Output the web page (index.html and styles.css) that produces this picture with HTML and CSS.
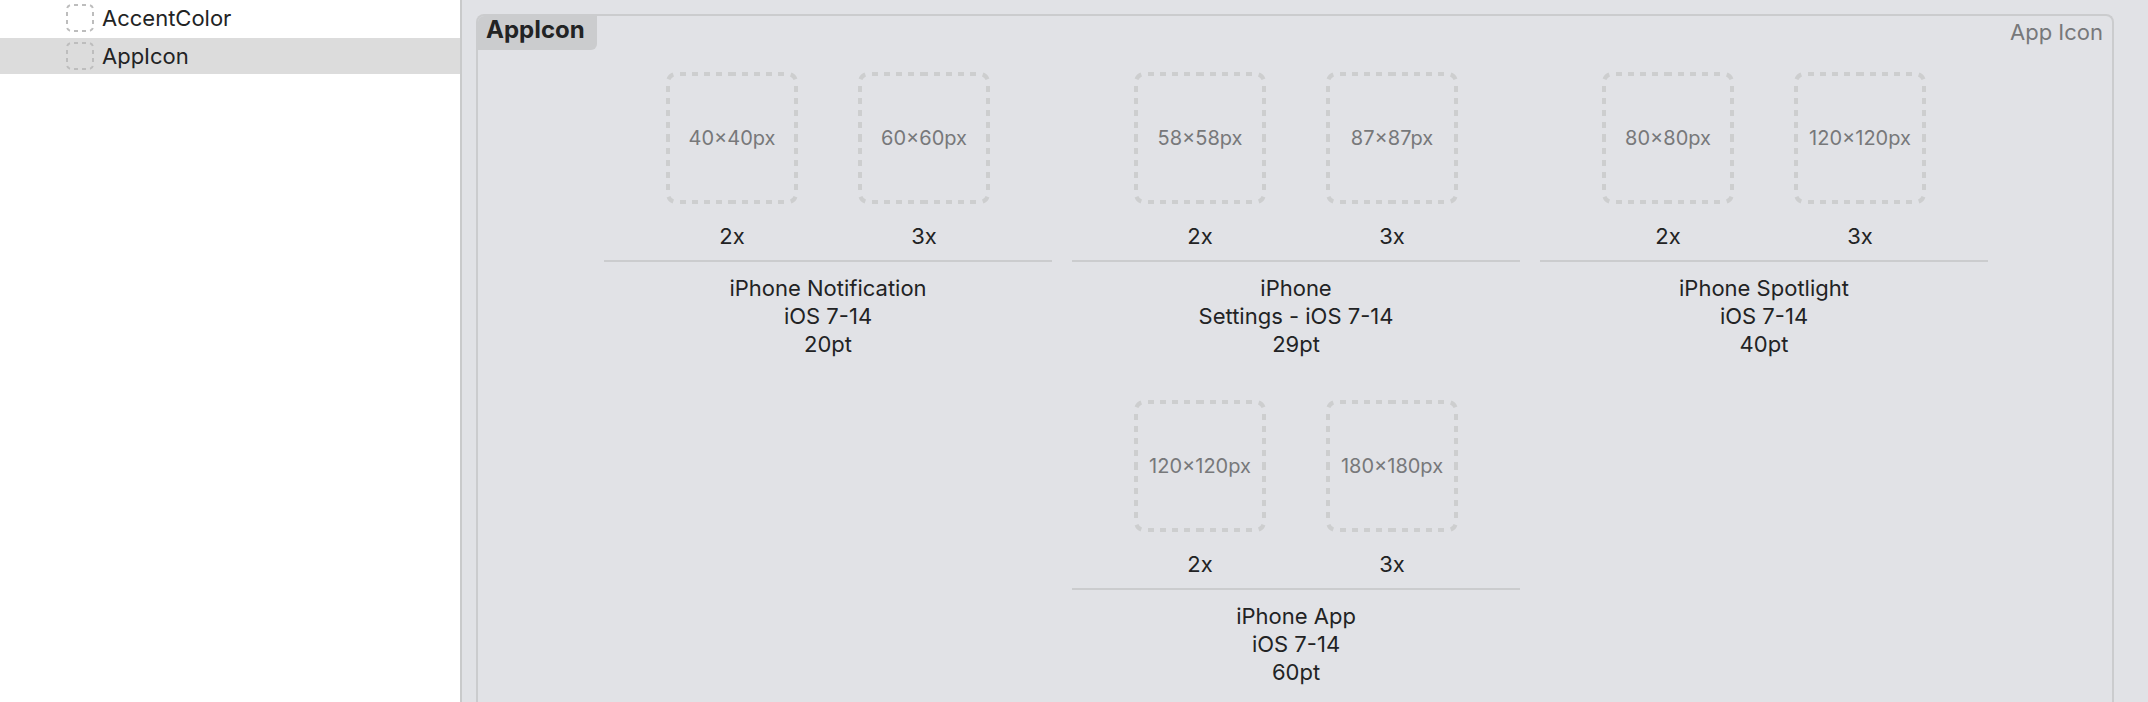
FILE: index.html
```html
<!DOCTYPE html>
<html lang="en">
<head>
<meta charset="utf-8">
<title>Asset Catalog</title>
<link rel="stylesheet" href="styles.css">
</head>
<body>
<svg class="defs" aria-hidden="true">
  <symbol id="well" viewBox="0 0 132 132">
    <g id="well-side">
      <path d="M14 2h6M26 2h6M38 2h6M50 2h6M62 2h8M76 2h6M88 2h6M100 2h6M112 2h6"/>
      <path d="M2.5 7.3A8 8 0 0 1 7.3 2.5"/>
    </g>
    <use href="#well-side" transform="rotate(90 66 66)"/>
    <use href="#well-side" transform="rotate(180 66 66)"/>
    <use href="#well-side" transform="rotate(270 66 66)"/>
  </symbol>
  <symbol id="slot" viewBox="0 0 28 28">
    <g id="slot-side">
      <path d="M8 1h4M16 1h4"/>
      <path d="M1.2 4A4 4 0 0 1 4 1.2"/>
    </g>
    <use href="#slot-side" transform="rotate(90 14 14)"/>
    <use href="#slot-side" transform="rotate(180 14 14)"/>
    <use href="#slot-side" transform="rotate(270 14 14)"/>
  </symbol>
</svg>
<div class="app">
  <nav class="sidebar">
    <button class="item" type="button"><svg class="item-icon"><use href="#slot"/></svg>AccentColor</button>
    <button class="item selected" type="button"><svg class="item-icon"><use href="#slot"/></svg>AppIcon</button>
  </nav>
  <main class="editor">
    <section class="set">
      <header class="set-header">
        <h1 class="set-name">AppIcon</h1>
        <span class="set-kind">App Icon</span>
      </header>
      <div class="groups">
        <article class="group">
          <div class="wells">
            <figure class="well"><div class="frame"><svg class="outline"><use href="#well"/></svg><span class="size">40×40px</span></div><figcaption>2x</figcaption></figure>
            <figure class="well"><div class="frame"><svg class="outline"><use href="#well"/></svg><span class="size">60×60px</span></div><figcaption>3x</figcaption></figure>
          </div>
          <p class="caption">iPhone Notification<br>iOS 7-14<br>20pt</p>
        </article>
        <article class="group">
          <div class="wells">
            <figure class="well"><div class="frame"><svg class="outline"><use href="#well"/></svg><span class="size">58×58px</span></div><figcaption>2x</figcaption></figure>
            <figure class="well"><div class="frame"><svg class="outline"><use href="#well"/></svg><span class="size">87×87px</span></div><figcaption>3x</figcaption></figure>
          </div>
          <p class="caption">iPhone<br>Settings - iOS 7-14<br>29pt</p>
        </article>
        <article class="group">
          <div class="wells">
            <figure class="well"><div class="frame"><svg class="outline"><use href="#well"/></svg><span class="size">80×80px</span></div><figcaption>2x</figcaption></figure>
            <figure class="well"><div class="frame"><svg class="outline"><use href="#well"/></svg><span class="size">120×120px</span></div><figcaption>3x</figcaption></figure>
          </div>
          <p class="caption">iPhone Spotlight<br>iOS 7-14<br>40pt</p>
        </article>
        <article class="group">
          <div class="wells">
            <figure class="well"><div class="frame"><svg class="outline"><use href="#well"/></svg><span class="size">120×120px</span></div><figcaption>2x</figcaption></figure>
            <figure class="well"><div class="frame"><svg class="outline"><use href="#well"/></svg><span class="size">180×180px</span></div><figcaption>3x</figcaption></figure>
          </div>
          <p class="caption">iPhone App<br>iOS 7-14<br>60pt</p>
        </article>
      </div>
    </section>
  </main>
</div>
</body>
</html>
```

FILE: styles.css
```css
* {
  box-sizing: border-box;
}

body {
  margin: 0;
  font: 22px/28px Inter, sans-serif;
  color: #222324;
  background: #e1e2e6;
}

.defs {
  position: absolute;
  width: 0;
  height: 0;
}

.app {
  display: flex;
  height: 100vh;
  overflow: hidden;
}

.sidebar {
  display: flex;
  flex-direction: column;
  gap: 2px;
  flex: none;
  width: 462px;
  background: #fff;
  border-right: 2px solid #c9cacb;
}

.item {
  display: flex;
  align-items: center;
  gap: 8px;
  height: 36px;
  padding: 0 0 0 66px;
  border: 0;
  background: none;
  font: inherit;
  color: inherit;
  text-align: left;
}

.item.selected {
  background: #dcdcdc;
}

.item-icon {
  width: 28px;
  height: 28px;
  fill: none;
  stroke: #bdbdbd;
  stroke-width: 2;
}

.editor {
  flex: 1;
  min-width: 0;
  padding: 14px 34px 0 14px;
}

.set {
  height: 100%;
  border: 2px solid #cbccce;
  border-bottom: 0;
  border-radius: 8px 8px 0 0;
}

.set-header {
  display: flex;
  justify-content: space-between;
  align-items: flex-start;
  height: 56px;
}

.set-name {
  margin: 0;
  padding: 0 12px 6px 8px;
  border-radius: 6px 0 6px 0;
  background: #cbccce;
  font-size: 24px;
  line-height: 28px;
  font-weight: 700;
}

.set-kind {
  padding: 2px 9px 0 0;
  color: #77787a;
}

.groups {
  display: flex;
  flex-wrap: wrap;
  justify-content: center;
  gap: 42px 20px;
  max-width: 1404px;
  padding-left: 2px;
  margin: 0 auto;
}

.group {
  width: 448px;
}

.wells {
  display: flex;
  justify-content: center;
  gap: 60px;
  padding-bottom: 10px;
  border-bottom: 2px solid #cbccce;
}

.well {
  margin: 0;
  text-align: center;
}

.well figcaption {
  padding-top: 18px;
}

.frame {
  display: grid;
  place-items: center;
  width: 132px;
  height: 132px;
}

.outline,
.size {
  grid-area: 1 / 1;
}

.outline {
  width: 132px;
  height: 132px;
  fill: none;
  stroke: #cdcecf;
  stroke-width: 4;
}

.size {
  font-size: 20px;
  color: #77787a;
}

.caption {
  margin: 0;
  padding-top: 12px;
  text-align: center;
}
```
